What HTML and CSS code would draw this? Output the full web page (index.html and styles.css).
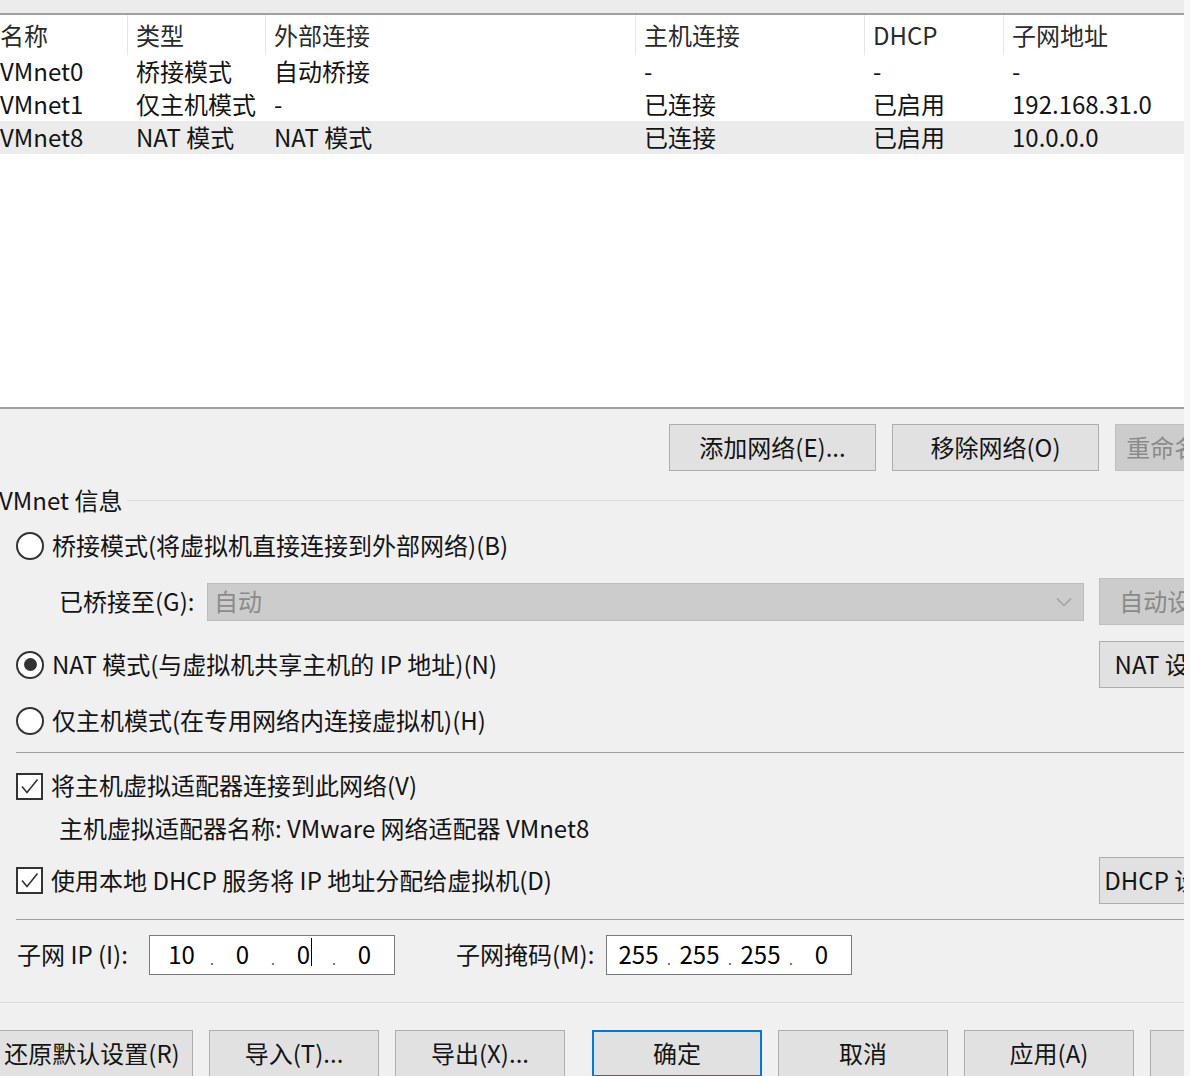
FILE: index.html
```html
<!DOCTYPE html>
<html lang="zh-CN">
<head>
<meta charset="utf-8">
<title>虚拟网络编辑器</title>
<link rel="stylesheet" href="styles.css">
</head>
<body>
<div class="window">
  <div class="topband"></div>

  <div class="netlist">
    <div class="lrow head">
      <div class="cell">名称</div>
      <div class="cell">类型</div>
      <div class="cell">外部连接</div>
      <div class="cell">主机连接</div>
      <div class="cell">DHCP</div>
      <div class="cell">子网地址</div>
    </div>
    <div class="lrow">
      <div class="cell">VMnet0</div>
      <div class="cell">桥接模式</div>
      <div class="cell">自动桥接</div>
      <div class="cell">-</div>
      <div class="cell">-</div>
      <div class="cell">-</div>
    </div>
    <div class="lrow">
      <div class="cell">VMnet1</div>
      <div class="cell">仅主机模式</div>
      <div class="cell">-</div>
      <div class="cell">已连接</div>
      <div class="cell">已启用</div>
      <div class="cell">192.168.31.0</div>
    </div>
    <div class="lrow sel">
      <div class="cell">VMnet8</div>
      <div class="cell">NAT 模式</div>
      <div class="cell">NAT 模式</div>
      <div class="cell">已连接</div>
      <div class="cell">已启用</div>
      <div class="cell">10.0.0.0</div>
    </div>
  </div>

  <div class="panel">
    <div class="netbtns">
      <button class="btn w207">添加网络(E)...</button>
      <button class="btn w207">移除网络(O)</button>
      <button class="btn w200 disabled">重命名网络(W)...</button>
    </div>

    <div class="group-title">
      <span class="txt gt-label">VMnet 信息</span>
      <span class="gline"></span>
    </div>

    <div class="opt r1">
      <span class="radio"></span>
      <span class="txt">桥接模式(将虚拟机直接连接到外部网络)(B)</span>
    </div>

    <div class="split bridge">
      <div class="bridge-left">
        <span class="txt blabel">已桥接至(G):</span>
        <div class="select">
          <span class="txt">自动</span>
          <svg class="chev" width="16" height="10" viewBox="0 0 16 10"><polyline points="1,1.5 8,8.5 15,1.5" fill="none" stroke="#9a9a9a" stroke-width="1.2"/></svg>
        </div>
      </div>
      <button class="btn w190 disabled">自动设置(U)...</button>
    </div>

    <div class="split nat">
      <div class="opt">
        <span class="radio on"></span>
        <span class="txt">NAT 模式(与虚拟机共享主机的 IP 地址)(N)</span>
      </div>
      <button class="btn w180">NAT 设置(S)...</button>
    </div>

    <div class="opt r3">
      <span class="radio"></span>
      <span class="txt">仅主机模式(在专用网络内连接虚拟机)(H)</span>
    </div>

    <div class="sep s1"></div>

    <div class="opt c1">
      <span class="check"><svg width="23" height="23" viewBox="0 0 23 23"><polyline points="4,11.5 9,17.5 19.5,4.5" fill="none" stroke="#333" stroke-width="1.6"/></svg></span>
      <span class="txt">将主机虚拟适配器连接到此网络(V)</span>
    </div>

    <div class="adapter">主机虚拟适配器名称: VMware 网络适配器 VMnet8</div>

    <div class="split dhcp">
      <div class="opt">
        <span class="check"><svg width="23" height="23" viewBox="0 0 23 23"><polyline points="4,11.5 9,17.5 19.5,4.5" fill="none" stroke="#333" stroke-width="1.6"/></svg></span>
        <span class="txt">使用本地 DHCP 服务将 IP 地址分配给虚拟机(D)</span>
      </div>
      <button class="btn w180">DHCP 设置(P)...</button>
    </div>

    <div class="sep s2"></div>

    <div class="subnet">
      <span class="txt sl1">子网 IP (I):</span>
      <div class="ipbox">
        <span class="txt seg">10</span><span class="dot">.</span>
        <span class="txt seg">0</span><span class="dot">.</span>
        <span class="txt seg"><span class="caretwrap">0<span class="caret"></span></span></span><span class="dot">.</span>
        <span class="txt seg">0</span>
      </div>
      <span class="txt sl2">子网掩码(M):</span>
      <div class="ipbox">
        <span class="txt seg">255</span><span class="dot">.</span>
        <span class="txt seg">255</span><span class="dot">.</span>
        <span class="txt seg">255</span><span class="dot">.</span>
        <span class="txt seg">0</span>
      </div>
    </div>

    <div class="sep s3"></div>

    <div class="footer">
      <button class="btn w202">还原默认设置(R)</button>
      <button class="btn w170">导入(T)...</button>
      <button class="btn w170">导出(X)...</button>
      <button class="btn w170 default gapbig">确定</button>
      <button class="btn w170">取消</button>
      <button class="btn w170">应用(A)</button>
      <button class="btn w170">帮助</button>
    </div>
  </div>
</div>
</body>
</html>
```

FILE: styles.css
```css
* {
  box-sizing: border-box;
  margin: 0;
  padding: 0;
}

html, body {
  width: 100%;
  height: 100%;
}

body {
  background: #f7f7f7;
  overflow: hidden;
  font-family: "Noto Sans CJK SC", "Noto Sans", sans-serif;
  font-size: 24px;
  color: #141414;
}

.window {
  width: 1184px;
  height: 1076px;
  overflow: hidden;
  background: #f0f0f0;
}

.topband {
  height: 13px;
  background: #ececec;
}

/* ---------- network list ---------- */
.netlist {
  height: 396px;
  background: #ffffff;
  border-top: 2px solid #a0a0a0;
  border-bottom: 2px solid #a0a0a0;
}

.lrow {
  display: grid;
  grid-template-columns: 136px 138px 370px 229px 139px 180px;
  margin-left: -8px;
  height: 33px;
  align-items: center;
}

.lrow .cell {
  height: 33px;
  padding-bottom: 3px;
  display: flex;
  align-items: center;
}

.lrow.head {
  height: 40px;
}

.lrow.head .cell {
  height: 40px;
  padding-bottom: 2px;
  border-right: 1px solid #e5e5e5;
  color: #2a2a2a;
}

.lrow.head .cell:last-child {
  border-right: none;
}

.lrow.sel {
  background: #ebebeb;
}

.cell {
  padding-left: 8px;
  white-space: nowrap;
}

/* ---------- panel ---------- */
.panel {
  width: 1330px;
}

.txt {
  padding-bottom: 3px;
}

.btn {
  height: 47px;
  background: #e1e1e1;
  border: 1px solid #adadad;
  font: inherit;
  color: #141414;
  display: flex;
  align-items: center;
  justify-content: center;
  white-space: nowrap;
  flex: none;
  padding-bottom: 2px;
}

.btn.disabled {
  background: #cccccc;
  border-color: #bfbfbf;
  color: #8a8a8a;
}

.btn.default {
  border: 2px solid #0078d7;
}

.w170 { width: 170px; }
.w180 { width: 180px; }
.w190 { width: 190px; }
.w200 { width: 200px; }
.w202 { width: 202px; }
.w207 { width: 207px; }

.netbtns {
  display: flex;
  gap: 16px;
  padding-left: 669px;
  margin-top: 15px;
}

.group-title {
  display: flex;
  align-items: center;
  height: 30px;
  margin-top: 15px;
  margin-left: -1px;
}

.gt-label {
  white-space: nowrap;
}

.gline {
  flex: 1;
  height: 1px;
  background: #dcdcdc;
  margin-left: 5px;
  margin-top: -2px;
}

.opt {
  display: flex;
  align-items: center;
  gap: 8px;
  height: 40px;
  padding-left: 16px;
  white-space: nowrap;
}

.r1 { margin-top: 10px; }

.radio {
  width: 28px;
  height: 28px;
  border-radius: 50%;
  border: 2px solid #333333;
  background: #ffffff;
  display: flex;
  align-items: center;
  justify-content: center;
  flex: none;
}

.radio.on::after {
  content: "";
  width: 13px;
  height: 13px;
  border-radius: 50%;
  background: #333333;
}

.check {
  width: 27px;
  height: 27px;
  border: 2px solid #333333;
  background: #ffffff;
  display: flex;
  align-items: center;
  justify-content: center;
  flex: none;
}

.split {
  display: grid;
  grid-template-columns: 1084px auto;
  column-gap: 15px;
  align-items: center;
  justify-items: start;
}

.bridge {
  margin-top: 12px;
}

.bridge-left {
  display: flex;
  align-items: center;
  padding-left: 59px;
  width: 1084px;
}

.blabel {
  width: 148px;
  flex: none;
  white-space: nowrap;
}

.select {
  flex: 1;
  height: 38px;
  background: #cccccc;
  border: 1px solid #bdbdbd;
  color: #8b8b8b;
  display: flex;
  align-items: center;
  justify-content: space-between;
  padding: 0 11px 0 6px;
}

.chev {
  display: block;
}

.nat {
  margin-top: 16px;
}

.r3 {
  margin-top: 13px;
}

.sep {
  height: 1px;
  background: #a0a0a0;
  margin-left: 16px;
}

.s1 { margin-top: 11px; }

.c1 { margin-top: 13px; }

.adapter {
  height: 30px;
  margin-top: 8px;
  padding-left: 59px;
  padding-bottom: 3px;
  white-space: nowrap;
  display: flex;
  align-items: center;
}

.dhcp {
  margin-top: 13px;
}

.s2 { margin-top: 15px; }

.subnet {
  display: flex;
  align-items: center;
  height: 40px;
  margin-top: 15px;
  padding-left: 17px;
  white-space: nowrap;
}

.sl1 {
  width: 132px;
  flex: none;
}

.sl2 {
  width: 150px;
  flex: none;
  margin-left: 61px;
}

.ipbox {
  display: flex;
  align-items: center;
  width: 246px;
  height: 40px;
  background: #ffffff;
  border: 1px solid #7a7a7a;
  padding-left: 3px;
  color: #000000;
  flex: none;
}

.seg {
  width: 57px;
  text-align: center;
  flex: none;
}

.dot {
  width: 4px;
  text-align: center;
  font-size: 14px;
  color: #555555;
  padding-top: 8px;
  flex: none;
}

.caretwrap {
  position: relative;
}

.caret {
  position: absolute;
  right: -2px;
  top: 2px;
  width: 1px;
  height: 28px;
  background: #000000;
}

.s3 {
  margin-top: 27px;
  margin-left: 0;
  background: #dadada;
}

.footer {
  display: flex;
  gap: 16px;
  margin-left: -9px;
  margin-top: 27px;
}

.footer .gapbig {
  margin-left: 11px;
}
```
